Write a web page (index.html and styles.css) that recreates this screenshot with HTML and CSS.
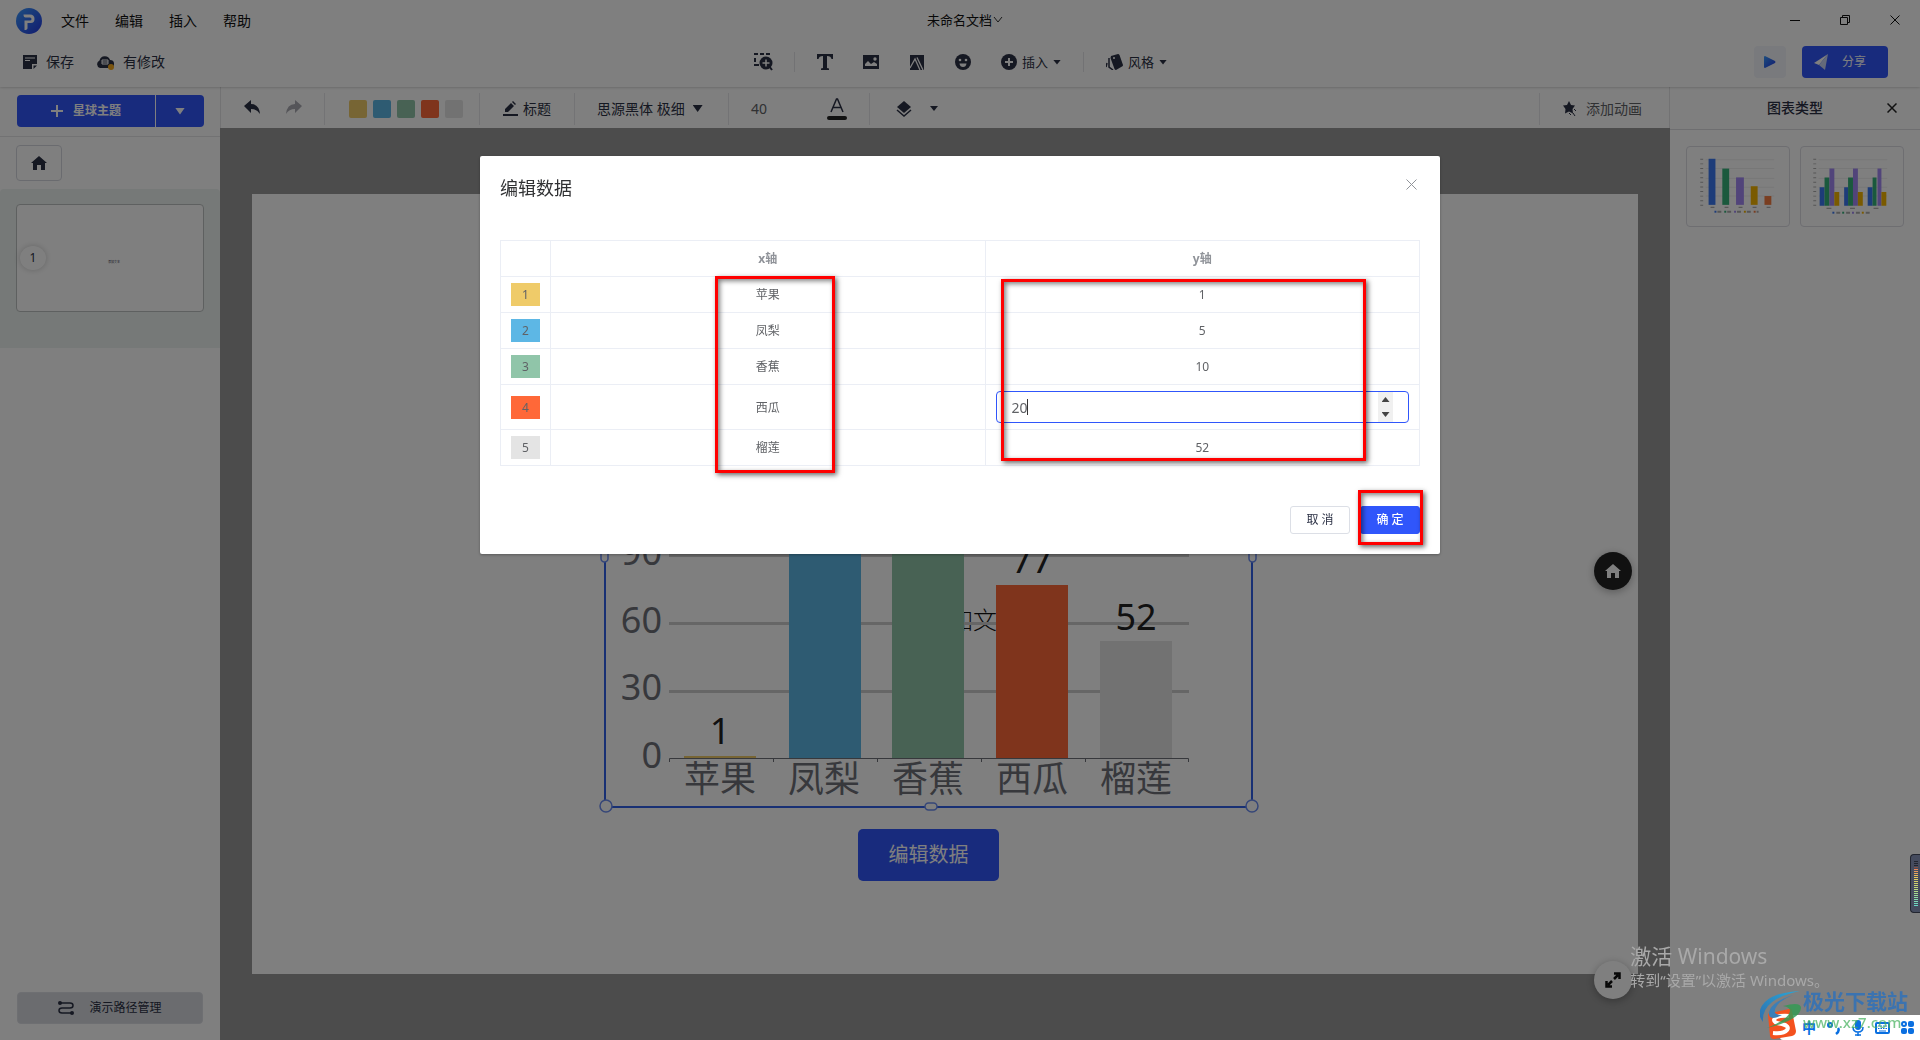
FILE: index.html
```html
<!DOCTYPE html>
<html lang="zh-CN">
<head>
<meta charset="utf-8">
<title>未命名文档</title>
<link rel="stylesheet" href="styles.css">
</head>
<body>
<div class="app">
  <header class="header">
    <div class="titlebar">
      <div class="titlebar-left">
        <svg class="logo" width="26" height="26" viewBox="0 0 26 26"><defs><linearGradient id="lg" x1="0" y1="0" x2="1" y2="1"><stop offset="0" stop-color="#3a9bff"/><stop offset="1" stop-color="#2438e0"/></linearGradient></defs><circle cx="13" cy="13" r="13" fill="url(#lg)"/><path d="M7.500 6.500H14q4.500 0 4.500 4.500T14 15h-2.500v5q0 2-3 2v-9.500H14q1.500 0 1.500-1.500T14 9.500H9.500q-2 0-2-3z" fill="#fff"/></svg>
        <nav class="menu"><a href="#">文件</a><a href="#">编辑</a><a href="#">插入</a><a href="#">帮助</a></nav>
      </div>
      <button class="doc-name">未命名文档<svg width="10" height="8" viewBox="0 0 10 8"><path d="M1 1l4 5 4-5" fill="none" stroke="#333" /></svg></button>
      <div class="window-controls">
        <button aria-label="最小化"><svg width="10" height="10"><path d="M0 5.500h10" stroke="#111"/></svg></button>
        <button aria-label="还原"><svg width="10" height="10" viewBox="0 0 10 10"><path d="M.5 2.500h7v7h-7zM2.500 2.500v-2h7v7h-2" fill="none" stroke="#111"/></svg></button>
        <button aria-label="关闭"><svg width="10" height="10" viewBox="0 0 10 10"><path d="M.5.5l9 9M9.500.5l-9 9" stroke="#111"/></svg></button>
      </div>
    </div>
    <div class="actions">
      <div class="file-actions">
        <button><svg width="14" height="14" viewBox="0 0 14 14"><path d="M0 0h14v9H9v5H0z" fill="#2b3044"/><path d="M10.500 10.500H14L10.500 14z" fill="#2b3044"/><path d="M2 3h10M2 5.500h5" stroke="#fff"/></svg>保存</button>
        <button><svg width="18" height="15" viewBox="0 0 18 15"><path d="M4 13a4 4 0 0 1-.5-7.500a5.500 5.500 0 0 1 10.600-.5A4 4 0 0 1 14 13z" fill="#2b3044"/><path d="M6 5h6v4H6zM6 7h6" fill="none" stroke="#fff"/><circle cx="15" cy="12" r="3" fill="#f5a81c"/></svg>有修改</button>
      </div>
      <div class="insert-actions">
        <button class="icon" aria-label="选区"><svg width="19" height="18" viewBox="0 0 19 18"><path d="M0 1h17" stroke="#2b3044" stroke-width="2" stroke-dasharray="4 2"/><path d="M1 5v4M1 11v2M0 12h5" fill="none" stroke="#2b3044" stroke-width="2"/><circle cx="12" cy="10" r="6.500" fill="#2b3044"/><path d="M15 13l3 4" stroke="#2b3044" stroke-width="2"/><path d="M8.500 10h7M12 6.500v7" stroke="#fff" stroke-width="1.500"/></svg></button>
        <span class="rule"></span>
        <button class="icon" aria-label="文本"><svg width="16" height="16" viewBox="0 0 16 16"><path d="M0 0h16v5h-1.500Q14 2 10 2v12l2 .5V16H4v-1.500l2-.5V2Q2 2 1.500 5H0z" fill="#2b3044"/></svg></button>
        <button class="icon" aria-label="图片"><svg width="16" height="14" viewBox="0 0 16 14"><path d="M0 0h16v14H0z" fill="#2b3044"/><path d="M2 11V9l3-3 3 3 3-2 3 2v2z" fill="#fff"/><circle cx="12" cy="4" r="1.700" fill="#fff"/></svg></button>
        <button class="icon" aria-label="形状"><svg width="16" height="15" viewBox="0 0 16 15"><path d="M1 0h14v15H1z" fill="#2b3044"/><path d="M1 13L6 4l5 11M8 2.500L14 15" fill="none" stroke="#fff" stroke-width="1.300"/></svg></button>
        <button class="icon" aria-label="表情"><svg width="16" height="16" viewBox="0 0 16 16"><circle cx="8" cy="8" r="8" fill="#2b3044"/><circle cx="5" cy="6" r="1.300" fill="#fff"/><circle cx="11" cy="6" r="1.300" fill="#fff"/><path d="M4.500 9.500h7Q11 13 8 13T4.500 9.500z" fill="#fff"/></svg></button>
        <button class="labelled"><svg width="16" height="16" viewBox="0 0 16 16"><circle cx="8" cy="8" r="8" fill="#2b3044"/><path d="M4 8h8M8 4v8" stroke="#fff" stroke-width="2"/></svg>插入<i class="caret"></i></button>
        <span class="rule"></span>
        <button class="labelled"><svg width="17" height="16" viewBox="0 0 17 16"><path d="M5 2l7-2q1 0 1.500 1L17 11q0 1-1 1.500L10 16q-1 0-1.500-1L4.500 4z" fill="#2b3044"/><path d="M3 4v9l4 3M1 9l-1 4" fill="none" stroke="#2b3044" stroke-width="1.500"/><circle cx="8" cy="4" r="1" fill="#fff"/></svg>风格<i class="caret"></i></button>
      </div>
      <div class="share-actions">
        <button class="play" aria-label="播放"><svg width="12" height="12" viewBox="0 0 12 12"><path d="M1 0Q0 0 0 1v10q0 1 1 1l10-5q1-1 0-2z" fill="url(#lg)"/></svg></button>
        <button class="share"><svg width="14" height="16" viewBox="0 0 14 16"><path d="M14 0L0 9l5 2z" fill="#fff"/><path d="M14 0L5 11l6 5z" fill="#c9d4f5"/></svg>分享</button>
      </div>
    </div>
  </header>

  <div class="workspace">
    <aside class="sidebar">
      <div class="theme-row">
        <button class="theme-main"><svg width="12" height="12" viewBox="0 0 12 12"><path d="M6 0v12M0 6h12" stroke="#fff" stroke-width="2"/></svg>星球主题</button><button class="theme-more" aria-label="更多"><i class="caret big white"></i></button>
      </div>
      <div class="home-row"><button class="home" aria-label="主页"><svg width="16" height="14" viewBox="0 0 16 14"><path d="M8 0l8 7h-2v7H10V9H6v5H2V7H0z" fill="#2b3044"/></svg></button></div>
      <div class="pages"><div class="thumb"><span class="page-no">1</span><span class="thumb-text">添加文本</span></div></div>
      <button class="path-button"><svg width="16" height="14" viewBox="0 0 16 14"><path d="M2 2h10q3 0 3 2.500T12 7H4Q1 7 1 9.500T4 12h10" fill="none" stroke="#2b3044" stroke-width="1.500"/><circle cx="2" cy="2" r="2" fill="#2b3044"/><circle cx="14" cy="12" r="2" fill="#2b3044"/></svg>演示路径管理</button>
    </aside>

    <main class="stage">
      <div class="format-bar">
        <button class="undo" aria-label="撤销"><svg width="16" height="14" viewBox="0 0 16 14"><path d="M7 0v4q8 0 9 10q-3-5-9-5v4L0 6z" fill="#2b3044"/></svg></button>
        <button class="undo" aria-label="重做"><svg width="16" height="14" viewBox="0 0 16 14"><path d="M9 0v4Q1 4 0 14q3-5 9-5v4l7-7z" fill="#aaaab2"/></svg></button>
        <div class="group swatches"><span class="c1"></span><span class="c2"></span><span class="c3"></span><span class="c4"></span><span class="c5"></span></div>
        <button class="group heading"><svg width="15" height="15" viewBox="0 0 15 15"><path d="M2 11V8l6-6 3 3-6 6zM9 1l1-1 3 3-1 1zM0 13h15v2H0z" fill="#2b3044"/></svg>标题</button>
        <button class="group font">思源黑体 极细<i class="caret big"></i></button>
        <div class="group size"><span>40</span><button class="text-color" aria-label="文字颜色"><svg width="20" height="22" viewBox="0 0 20 22"><path d="M4 14L9.500 1h1L16 14M6 9.500h8" fill="none" stroke="#2b3044" stroke-width="1.500"/><rect y="18" width="20" height="4" rx="2" fill="#222"/></svg></button></div>
        <button class="group layers" aria-label="图层"><svg width="16" height="16" viewBox="0 0 16 16"><path d="M8 0l7 6-7 6-7-6z" fill="#2b3044"/><path d="M1 9l7 6 7-6" fill="none" stroke="#2b3044" stroke-width="1.500"/></svg><i class="caret"></i></button>
        <button class="group animate"><svg width="14" height="16" viewBox="0 0 14 16"><path d="M6 0l2 4 4 .5L9.500 8l.5 4.500-4-2-4 2 .5-4.500L0 4.500 4 4z" fill="#2b3044"/><path d="M6 12l2 2M10 12l2 3M11 8l2 2" stroke="#2b3044"/></svg>添加动画</button>
      </div>
      <div class="canvas">
        <div class="slide">
          <span class="placeholder">添加文本</span>
          <svg class="chart" width="648" height="497" viewBox="0 0 648 497">
            <g stroke="#ccc" stroke-width="3"><path d="M64 42.500h520M64 110.500h520M64 178.500h520M64 245.500h520M64 313.500h520M64 381.500h520"/></g>
            <rect x="79" y="446" width="72" height="3" fill="#efcb69"/>
            <rect x="184" y="123" width="72" height="326" fill="#5db7e5"/>
            <rect x="287" y="180" width="72" height="269" fill="#90c5a9"/>
            <rect x="391" y="275" width="72" height="174" fill="#ff6838"/>
            <rect x="495" y="331" width="72" height="118" fill="#e4e4e4"/>
            <path d="M64.500 452v-3.500h519v3.500M168.500 449v3M272.500 449v3M376.500 449v3M480.500 449v3" fill="none" stroke="#6e7079" stroke-width="1"/>
            <g class="axis-value"><text x="57" y="255">90</text><text x="57" y="323">60</text><text x="57" y="390">30</text><text x="57" y="458">0</text></g>
            <g class="axis-name"><text x="115" y="482">苹果</text><text x="219" y="482">凤梨</text><text x="323" y="482">香蕉</text><text x="427" y="482">西瓜</text><text x="531" y="482">榴莲</text></g>
            <g class="bar-value"><text x="115" y="434">1</text><text x="427" y="263">77</text><text x="531" y="320">52</text></g>
            <rect x="0" y="0" width="647" height="497" fill="none" stroke="#3060e8" stroke-width="2"/>
            <g fill="#fff" stroke="#6b8cf0" stroke-width="1.500"><circle cx="1" cy="496" r="6"/><circle cx="647" cy="496" r="6"/><rect x="320" y="493" width="12" height="7" rx="3.500"/><rect x="-4" y="240" width="7" height="12" rx="3.500"/><rect x="644" y="240" width="7" height="12" rx="3.500"/></g>
          </svg>
          <button class="edit-data">编辑数据</button>
        </div>
        <button class="float-button dark" aria-label="主页"><svg width="16" height="14" viewBox="0 0 16 14"><path d="M8 0l8 7h-2v7H10V9H6v5H2V7H0z" fill="#fff"/></svg></button>
        <button class="float-button light" aria-label="全屏"><svg width="16" height="16" viewBox="0 0 16 16"><path d="M3 13l4-4M9 7l4-4M9 1.500h5.500V7M1.500 9v5.500H7" fill="none" stroke="#111" stroke-width="2.500"/></svg></button>
      </div>
    </main>

    <aside class="panel">
      <div class="panel-head"><h2>图表类型</h2><button aria-label="关闭"><svg width="10" height="10" viewBox="0 0 10 10"><path d="M.5.5l9 9M9.500.5l-9 9" stroke="#222" stroke-width="1.500"/></svg></button></div>
      <div class="chart-types">
        <button aria-label="柱状图"><svg viewBox="0 0 104 80"><path d="M19 13h70M19 22h70M19 32h70M19 41h70M19 50h70" stroke="#eee"/><path d="M15 12v48" stroke="#aaa" stroke-width="3" stroke-dasharray="1 3.700"/><path d="M22 12h7v47h-7z" fill="#3a78f2"/><path d="M36 22h7v37h-7z" fill="#34b27b"/><path d="M50 31h8v28h-8z" fill="#a389f4"/><path d="M65 40h7v19h-7z" fill="#f5b400"/><path d="M79 50h7v9h-7z" fill="#f47d43"/><path d="M24 61.500h62" stroke="#999" stroke-dasharray="4 10.300"/><path d="M31 66h42" stroke="#aaa" stroke-width="2" stroke-dasharray="4 6"/><path d="M28 65h2v2h-2z" fill="#3a78f2"/><path d="M38 65h2v2h-2z" fill="#34b27b"/><path d="M48 65h2v2h-2z" fill="#a389f4"/><path d="M58 65h2v2h-2z" fill="#f5b400"/><path d="M68 65h2v2h-2z" fill="#f47d43"/></svg></button>
        <button aria-label="分组柱状图"><svg viewBox="0 0 104 80"><path d="M18 13h70M18 22h70M18 32h70M18 41h70M18 50h70" stroke="#eee"/><path d="M14 12v48" stroke="#aaa" stroke-width="3" stroke-dasharray="1 3.700"/><path d="M19 41h5v19h-5zM44 41h4v19h-4zM68 41h5v19h-5z" fill="#3a78f2"/><path d="M24 31h5v29h-5zM48 31h5v29h-5zM73 31h4v29h-4z" fill="#34b27b"/><path d="M29 22h5v38h-5zM53 22h5v38h-5zM78 22h4v38h-4z" fill="#a389f4"/><path d="M34 46h5v14h-5zM58 46h5v14h-5zM82 46h5v14h-5z" fill="#f5b400"/><path d="M26 62.500h56" stroke="#999" stroke-dasharray="5 19"/><path d="M36 67h34" stroke="#aaa" stroke-width="2" stroke-dasharray="4 6"/><path d="M32 66h2v2h-2z" fill="#3a78f2"/><path d="M42 66h2v2h-2z" fill="#34b27b"/><path d="M52 66h2v2h-2z" fill="#a389f4"/><path d="M62 66h2v2h-2z" fill="#f5b400"/></svg></button>
      </div>
    </aside>
  </div>
</div>

<div class="overlay">
  <section class="dialog" role="dialog" aria-labelledby="dialog-title">
    <div class="dialog-head"><h1 id="dialog-title">编辑数据</h1><button aria-label="关闭"><svg width="11" height="11" viewBox="0 0 11 11"><path d="M.5.5l10 10M10.500.5l-10 10" stroke="#909399"/></svg></button></div>
    <table class="data">
      <thead><tr><th class="index"></th><th>x轴</th><th>y轴</th></tr></thead>
      <tbody>
        <tr><td><span class="chip c1">1</span></td><td>苹果</td><td>1</td></tr>
        <tr><td><span class="chip c2">2</span></td><td>凤梨</td><td>5</td></tr>
        <tr><td><span class="chip c3">3</span></td><td>香蕉</td><td>10</td></tr>
        <tr class="editing"><td><span class="chip c4">4</span></td><td>西瓜</td><td><div class="field"><input type="number" value="20" aria-label="西瓜 y轴"><span class="cursor"></span><span class="spinner"><i class="caret up"></i><i class="caret"></i></span></div></td></tr>
        <tr><td><span class="chip c5">5</span></td><td>榴莲</td><td>52</td></tr>
      </tbody>
    </table>
    <div class="dialog-foot"><button class="cancel">取 消</button><button class="confirm">确 定</button></div>
    <span class="mark mark-x"></span><span class="mark mark-y"></span><span class="mark mark-ok"></span>
  </section>
</div>

<div class="activate"><p class="activate-title">激活 Windows</p><p>转到“设置”以激活 Windows。</p></div>
<div class="meter"></div>
<div class="ime">
  <span>中</span><svg width="14" height="14" viewBox="0 0 14 14"><circle cx="3" cy="4" r="2" fill="none" stroke="#0a6fe0" stroke-width="2"/><path d="M11 7q2 3-2 6" fill="none" stroke="#0a6fe0" stroke-width="2.500"/></svg>
  <svg width="12" height="16" viewBox="0 0 12 16"><rect x="3" width="6" height="10" rx="3" fill="#0a6fe0"/><path d="M1 7q0 5 5 5t5-5M6 12v4M3 15h6" fill="none" stroke="#0a6fe0" stroke-width="1.500"/></svg>
  <svg width="15" height="12" viewBox="0 0 15 12"><rect x="1" y="1" width="13" height="10" rx="1" fill="none" stroke="#0a6fe0" stroke-width="2"/><path d="M3 4h9M3 6.500h9" stroke="#0a6fe0" stroke-dasharray="1.500 1"/><path d="M4 9h7" stroke="#0a6fe0"/></svg>
  <svg width="13" height="13" viewBox="0 0 13 13"><circle cx="3" cy="3" r="2" fill="none" stroke="#0a6fe0" stroke-width="2"/><rect x="7" width="6" height="6" rx="2" fill="#0a6fe0"/><rect y="7" width="6" height="6" rx="2" fill="#0a6fe0"/><rect x="7" y="7" width="6" height="6" rx="2" fill="#0a6fe0"/></svg>
</div>
<div class="site">
  <svg width="42" height="50" viewBox="0 0 42 50"><defs><linearGradient id="sg" x1="0" y1="1" x2="1" y2="0"><stop offset="0" stop-color="#2e6faf"/><stop offset="1" stop-color="#29a8d8"/></linearGradient></defs><path d="M8 25q0-2 3-2l18-4q3-1 3 2l4 20q0 4-4 5l-18 3q-3 0-4-3z" fill="#f4511e"/><path d="M29 26q-14-1-15 4 0 3 8 4 8 2 5 6-3 4-14 3" fill="none" stroke="#fff" stroke-width="4"/><path d="M40 1Q5 3 0 20q-2 6 3 12Q1 9 40 1z" fill="url(#sg)"/><path d="M33 5Q8 13 9 25q2 6 13 0-9 0-7-6Q18 11 33 5z" fill="#3b7fb8"/><path d="M23 16q18-5 18 2-1 12-34 20 22-9 23-17 0-4-7-5z" fill="#349a54" opacity=".85"/></svg>
  <div><p class="site-name">极光下载站</p><p class="site-url">www.xz7.com</p></div>
</div>
</body>
</html>
```
FILE: styles.css
```css
* { box-sizing: border-box; }
body { margin: 0; overflow: hidden; color: #2b3044; font: 14px/20px "Noto Sans", "Noto Sans CJK SC", sans-serif; }
button { display: flex; align-items: center; padding: 0; border: 0; background: none; color: inherit; font: inherit; white-space: nowrap; }
svg { display: block; flex: none; }
h1, h2, p { margin: 0; }
a { color: inherit; text-decoration: none; }

.c1 { background: #efcb69; }
.c2 { background: #5db7e5; }
.c3 { background: #90c5a9; }
.c4 { background: #ff6838; }
.c5 { background: #e4e4e4; }

.caret { width: 8px; height: 5px; background: currentColor; clip-path: polygon(0 0, 100% 0, 50% 100%); }
.caret.big { width: 10px; height: 7px; }
.caret.white { background: #fff; }
.caret.up { clip-path: polygon(0 100%, 100% 100%, 50% 0); }

.app { display: flex; flex-direction: column; height: 100vh; background: #fff; }
.header { position: relative; z-index: 1; height: 87px; background: #fff; box-shadow: 0 0 3px rgba(0, 0, 0, .3); }
.titlebar { display: grid; grid-template-columns: 1fr auto 1fr; align-items: center; height: 39px; padding: 0 16px; color: #111; }
.titlebar-left { display: flex; align-items: center; gap: 19px; padding-top: 2px; }
.menu { display: flex; gap: 26px; }
.doc-name { gap: 1px; padding-left: 10px; font-size: 13px; }
.window-controls { display: flex; justify-content: flex-end; gap: 40px; padding-right: 4px; }
.actions { display: grid; grid-template-columns: 1fr auto 1fr; align-items: center; height: 46px; }
.file-actions { display: flex; gap: 22px; padding-left: 23px; }
.file-actions button { gap: 9px; }
.insert-actions { display: flex; align-items: center; gap: 30px; padding-left: 3px; }
.insert-actions .icon { justify-content: center; width: 16px; }
.insert-actions .labelled { gap: 5px; font-size: 13px; }
.rule { width: 1px; height: 20px; margin: 0 -8px; background: #e4e4e8; }
.share-actions { display: flex; justify-content: flex-end; gap: 16px; padding-right: 32px; }
.play { justify-content: center; width: 32px; height: 32px; border-radius: 4px; background: #f3f4fa; }
.share { gap: 14px; width: 86px; height: 32px; padding-left: 12px; border-radius: 4px; background: #3056fb; color: #fff; font-size: 12px; }

.workspace { display: flex; flex: 1; min-height: 0; }
.sidebar { display: flex; flex-direction: column; width: 220px; padding-bottom: 16px; }
.theme-row { display: flex; gap: 1px; height: 50px; padding: 8px 16px 9px 17px; border-bottom: 1px solid #e4e4e6; }
.theme-main { flex: 1; justify-content: center; gap: 10px; border-radius: 4px 0 0 4px; background: #3056fb; color: #fff; font-size: 12px; font-weight: 700; }
.theme-more { justify-content: center; width: 48px; border-radius: 0 4px 4px 0; background: #3056fb; }
.home-row { padding: 8px 16px; }
.home { justify-content: center; width: 46px; height: 36px; border: 1px solid #d5d7df; border-radius: 4px; }
.pages { height: 159px; padding: 15px 16px; border-radius: 4px 4px 0 0; background: #ecf2f0; }
.thumb { display: grid; grid-template-columns: 1fr auto 1fr; align-items: center; height: 108px; padding: 0 3px; border: 1px solid #bcc0c0; border-radius: 4px; background: #fff; }
.page-no { width: 26px; height: 24px; border-radius: 50%; background: #fff; box-shadow: 0 0 6px rgba(0, 0, 0, .2); font-size: 12px; line-height: 24px; text-align: center; }
.thumb-text { padding: 8px 0 0 8px; font-size: 3px; line-height: 4px; }
.path-button { justify-content: center; gap: 15px; height: 32px; margin: auto 17px 0; border: 1px solid #dcdee4; border-radius: 4px; background: #d6d8de; font-size: 12px; }

.stage { display: flex; flex: 1; flex-direction: column; min-width: 0; }
.format-bar { display: flex; align-items: center; height: 41px; padding: 2px 0 0 2px; border: solid #e4e4e6; border-width: 0 1px; }
.undo { justify-content: center; width: 42px; padding: 0 0 4px 16px; }
.format-bar .undo + .group { margin-left: 17px; }
.group { display: flex; align-items: center; height: 32px; border-left: 1px solid #e6e6ea; }
.swatches { gap: 6px; width: 155px; padding-left: 24px; }
.swatches span { width: 18px; height: 18px; border-radius: 2px; }
.heading { gap: 5px; width: 95px; padding-left: 23px; }
.font { gap: 8px; width: 154px; padding-left: 22px; }
.size { gap: 60px; width: 141px; padding-left: 22px; color: #606266; }
.layers { gap: 18px; padding-left: 26px; }
.animate { gap: 9px; margin-left: auto; padding: 0 27px 0 23px; color: #606266; }
.canvas { position: relative; display: flex; flex: 1; padding: 66px 32px; background: #999; }
.slide { position: relative; flex: 1; background: #fff; }
.placeholder { position: absolute; left: 673px; top: 408px; color: #111; font-size: 24px; font-weight: 300; line-height: 36px; }
.chart { position: absolute; left: 353px; top: 116px; overflow: visible; font-size: 36px; }
.axis-value { fill: #6e7079; text-anchor: end; }
.axis-name { fill: #6e7079; text-anchor: middle; }
.bar-value { fill: #222; text-anchor: middle; }
.edit-data { position: absolute; left: 606px; top: 635px; justify-content: center; width: 141px; height: 52px; border-radius: 5px; background: #3056fb; color: #fff; font-size: 20px; }
.float-button { position: absolute; right: 38px; justify-content: center; width: 38px; height: 38px; border-radius: 50%; box-shadow: 0 2px 8px rgba(0, 0, 0, .3); }
.dark { top: 424px; background: #222; }
.light { bottom: 41px; background: #fff; }

.panel { width: 250px; }
.panel-head { display: grid; grid-template-columns: 1fr auto 1fr; align-items: center; height: 43px; border-bottom: 1px solid #dcdce0; }
.panel-head h2 { grid-column: 2; font-size: 14px; font-weight: 500; }
.panel-head button { justify-self: end; margin-right: 23px; }
.chart-types { display: flex; gap: 10px; padding: 16px; }
.chart-types button { flex: 1; height: 81px; border: 1px solid #dcdce2; border-radius: 4px; }
.chart-types svg { flex: 1; min-width: 0; }

.overlay { position: fixed; inset: 0; z-index: 5; background: rgba(0, 0, 0, .5); }
.dialog { position: relative; width: 50%; margin: 15vh auto 0; padding: 20px; border-radius: 2px; background: #fff; box-shadow: 0 1px 3px rgba(0, 0, 0, .3); }
.dialog-head { display: flex; justify-content: space-between; height: 64px; padding-right: 3px; }
.dialog-head h1 { color: #303133; font-size: 18px; font-weight: 400; line-height: 24px; }
.dialog-head button { height: 16px; }
.data { width: 100%; border-collapse: collapse; table-layout: fixed; color: #606266; font-size: 12px; line-height: 23px; text-align: center; }
.data th, .data td { height: 36px; padding: 0 10px; border: 1px solid #ebeef5; }
.data th { color: #909399; font-weight: 700; }
.data .index { width: 50px; }
.data .editing td { height: 45px; }
.chip { display: block; height: 23px; }
.field { position: relative; }
.field input { display: block; width: 100%; height: 32px; padding: 0 15px; border: 1px solid #3056fb; border-radius: 4px; outline: 0; background: #fff; color: #606266; font: inherit; font-size: 14px; appearance: textfield; }
.field input::-webkit-inner-spin-button { appearance: none; }
.cursor { position: absolute; left: 31px; top: 8px; width: 1px; height: 16px; background: #333; }
.spinner { position: absolute; right: 16px; top: 1px; display: flex; flex-direction: column; align-items: center; justify-content: space-around; width: 15px; height: 30px; background: #f0f0f0; color: #444; }
.dialog-foot { display: flex; justify-content: flex-end; gap: 10px; padding-top: 40px; }
.dialog-foot button { justify-content: center; width: 60px; height: 28px; border: 1px solid #dcdfe6; border-radius: 3px; font-size: 12px; }
.dialog-foot .confirm { border-color: #3056fb; background: #3056fb; color: #fff; font-weight: 500; }
.mark { position: absolute; border: 3px solid #f00; box-shadow: 2px 2px 5px rgba(0, 0, 0, .6), inset 2px 2px 5px rgba(0, 0, 0, .5); }
.mark-x { left: 235px; top: 120px; width: 120px; height: 197px; }
.mark-y { left: 521px; top: 123px; width: 365px; height: 182px; }
.mark-ok { left: 878px; top: 334px; width: 65px; height: 55px; }

.activate { position: fixed; right: 91px; bottom: 49px; z-index: 6; color: #a9a9a9; font-size: 15px; line-height: 22px; }
.activate-title { font-size: 21px; line-height: 26px; }
.meter { position: fixed; right: 0; top: 854px; z-index: 6; width: 10px; height: 59px; border: 1px solid #22252f; border-right: 0; border-radius: 4px 0 0 4px; background: linear-gradient(#22252f, #22252f 6px, #e87a5a 7px, #e8c95a 16px, #b5dc84 30px, #5fd8cf) 3px 6px / 4px 46px no-repeat, #454b5e; }
.meter::after { content: ""; display: block; width: 4px; height: 46px; margin: 6px 3px; background: repeating-linear-gradient(transparent 0 1px, #454b5e 1px 2px); }
.ime { position: fixed; right: 0; bottom: 0; z-index: 6; display: flex; align-items: center; justify-content: flex-end; gap: 11px; width: 140px; height: 25px; padding-right: 6px; border-radius: 3px 0 0 3px; background: #fff; color: #0a6fe0; font-size: 14px; font-weight: 700; }
.site { position: fixed; right: 12px; bottom: 0; z-index: 7; display: flex; gap: 1px; height: 50px; font-weight: 700; white-space: nowrap; }
.site-name { color: #3b73b0; font-size: 21px; line-height: 22px; }
.site-url { color: rgba(65, 175, 90, .7); font-size: 15px; font-weight: 500; line-height: 20px; }
```
